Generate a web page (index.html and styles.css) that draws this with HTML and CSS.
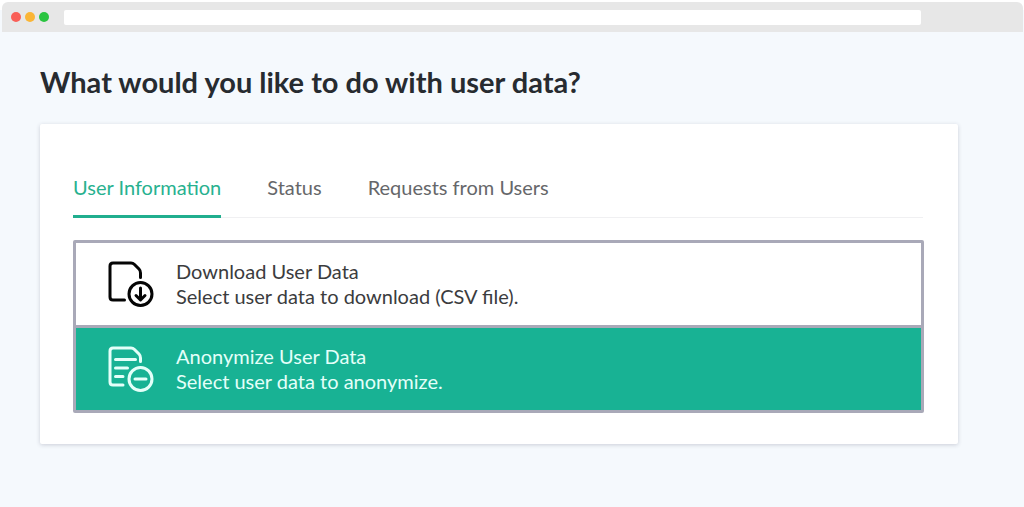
FILE: index.html
```html
<!DOCTYPE html>
<html lang="en">
<head>
<meta charset="utf-8">
<meta name="viewport" content="width=device-width, initial-scale=1">
<title>User Data</title>
<link rel="stylesheet" href="styles.css">
</head>
<body>
<header class="browser-bar">
  <div class="dots">
    <span class="dot dot-red"></span>
    <span class="dot dot-yellow"></span>
    <span class="dot dot-green"></span>
  </div>
  <input class="address" type="text" aria-label="Address">
</header>
<main class="page">
  <h1 class="title">What would you like to do with user data?</h1>
  <section class="card">
    <div class="tabs" role="tablist">
      <button class="tab tab-active" type="button" role="tab" aria-selected="true">User Information</button>
      <button class="tab" type="button" role="tab" aria-selected="false">Status</button>
      <button class="tab" type="button" role="tab" aria-selected="false">Requests from Users</button>
    </div>
    <div class="options">
      <button class="option" type="button">
        <svg class="option-icon" viewBox="0 0 46 46" aria-hidden="true">
          <path d="M16.500 39H5Q2 39 2 36V5Q2 2 5 2H23Q25 2 26.500 3.500L31 8Q32.500 9.500 32.500 12V16.500"/>
          <circle cx="32.500" cy="33" r="11.500"/>
          <path d="M32.500 27V38.500M28 34.500L32.500 39L37 34.500"/>
        </svg>
        <span class="option-text">
          <span>Download User Data</span>
          <span>Select user data to download (CSV file).</span>
        </span>
      </button>
      <button class="option option-selected" type="button">
        <svg class="option-icon" viewBox="0 0 46 46" aria-hidden="true">
          <path d="M15 39H5Q2 39 2 36V5Q2 2 5 2H23Q25 2 26.500 3.500L31 8Q32.500 9.500 32.500 12V15.500"/>
          <path d="M7.500 13.500H27.500M7.500 22H19.500M7.500 30.500H15"/>
          <circle cx="32.500" cy="33" r="11.500"/>
          <path d="M27 33H38"/>
        </svg>
        <span class="option-text">
          <span>Anonymize User Data</span>
          <span>Select user data to anonymize.</span>
        </span>
      </button>
    </div>
  </section>
</main>
</body>
</html>
```
FILE: styles.css
```css
* {
  box-sizing: border-box;
}

body {
  margin: 0;
  padding: 2px 1px 0 2px;
  min-height: 100vh;
  background: linear-gradient(#ffffff 0 10px, #f5f9fd 10px);
  font-family: Lato, "Open Sans", sans-serif;
  color: #3b3c3e;
}

.browser-bar {
  display: flex;
  align-items: center;
  gap: 15px;
  height: 30px;
  padding: 0 102px 0 9px;
  background: #e7e7e7;
  border-radius: 6px 6px 0 0;
}

.dots {
  display: flex;
  gap: 4px;
}

.dot {
  width: 10px;
  height: 10px;
  border-radius: 50%;
}

.dot-red {
  background: #f95f57;
}

.dot-yellow {
  background: #fab536;
}

.dot-green {
  background: #2ac440;
}

.address {
  flex: 1;
  min-width: 0;
  height: 15px;
  padding: 0 6px;
  border: 0;
  border-radius: 2px;
  background: #ffffff;
}

.page {
  padding: 32px 65px 32px 38px;
}

.title {
  margin: 0 0 24px;
  font-size: 29px;
  line-height: 36px;
  font-weight: 700;
  color: #272b30;
}

.card {
  padding: 48px 34px 31px 33px;
  background: #ffffff;
  border-radius: 2px;
  box-shadow: 0 1px 4px rgba(40, 40, 70, 0.2);
}

.tabs {
  display: flex;
  gap: 46px;
  margin: 0 1px 22px 0;
  box-shadow: inset 0 -1px #f0f0f2;
}

.tab {
  height: 46px;
  padding: 0 0 13px;
  border: 0;
  border-bottom: 3px solid transparent;
  background: none;
  font: inherit;
  font-size: 20px;
  line-height: 30px;
  color: #66676a;
  white-space: nowrap;
}

.tab-active {
  border-color: #20ae8e;
  color: #28b18f;
}

.options {
  display: flex;
  flex-direction: column;
  gap: 3px;
  padding: 3px;
  border-radius: 2px;
  background: #a9a9b8;
}

.option {
  display: flex;
  align-items: center;
  gap: 22px;
  width: 100%;
  height: 82px;
  padding: 0 32px;
  border: 0;
  background: #ffffff;
  font: inherit;
  font-size: 20px;
  line-height: 25px;
  text-align: left;
  color: #3b3c3e;
}

.option-selected {
  background: #18b294;
  color: #e4fff9;
}

.option-icon {
  flex: none;
  width: 46px;
  height: 46px;
  fill: none;
  stroke: #050505;
  stroke-width: 3;
  stroke-linecap: round;
  stroke-linejoin: round;
}

.option-selected .option-icon {
  stroke: #e4fff9;
}

.option-text {
  display: flex;
  flex-direction: column;
}
```
